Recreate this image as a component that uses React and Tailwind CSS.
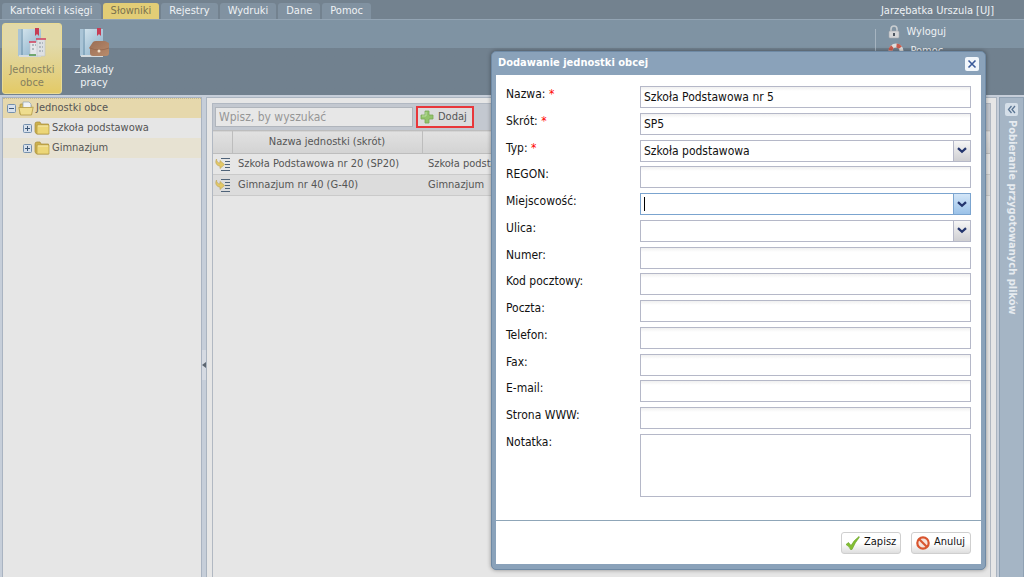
import React, { useState } from "react";

const tabs = ["Kartoteki i księgi", "Słowniki", "Rejestry", "Wydruki", "Dane", "Pomoc"];

const rows = [
  { name: "Szkoła Podstawowa nr 20 (SP20)", type: "Szkoła podstawowa" },
  { name: "Gimnazjum nr 40 (G-40)", type: "Gimnazjum" },
];

const fields = [
  { id: "nazwa", label: "Nazwa:", required: true, value: "Szkoła Podstawowa nr 5" },
  { id: "skrot", label: "Skrót:", required: true, value: "SP5" },
  { id: "typ", label: "Typ:", required: true, kind: "select", value: "Szkoła podstawowa" },
  { id: "regon", label: "REGON:" },
  { id: "miejscowosc", label: "Miejscowość:", kind: "select", active: true },
  { id: "ulica", label: "Ulica:", kind: "select" },
  { id: "numer", label: "Numer:" },
  { id: "kod", label: "Kod pocztowy:" },
  { id: "poczta", label: "Poczta:" },
  { id: "telefon", label: "Telefon:" },
  { id: "fax", label: "Fax:" },
  { id: "email", label: "E-mail:" },
  { id: "www", label: "Strona WWW:" },
  { id: "notatka", label: "Notatka:", kind: "textarea" },
];

/* Icons */

const BookIcon = ({ variant }) => (
  <svg width="32" height="32" viewBox="0 0 32 32" aria-hidden="true">
    <defs>
      <linearGradient id="cover" x1="0" y1="0" x2="1" y2="1">
        <stop offset="0" stopColor="#d9e8f0" />
        <stop offset="1" stopColor="#86adc7" />
      </linearGradient>
      <linearGradient id="leather" x1="0" y1="0" x2="1" y2="1">
        <stop offset="0" stopColor="#9a6d55" />
        <stop offset="1" stopColor="#b98c6c" />
      </linearGradient>
    </defs>
    <path d="M2 2h23v27H2z" fill="url(#cover)" />
    <path d="M2 2h3v27H2z" fill="#a9c4d6" />
    <path d="M6 2v27" stroke="#5f87a3" />
    <path d="M3 29h22" stroke="#d5dce0" strokeWidth="2" />
    <path d="M19 1h4v8l-2-2-2 2z" fill="#c63d55" />
    {variant === "units" ? (
      <g>
        <path d="M14 15h8v14h-8z" fill="#e4e7ea" stroke="#bcc4ca" strokeWidth=".6" />
        <path d="M21 12h8v17h-8z" fill="#dde0e3" stroke="#bcc4ca" strokeWidth=".6" />
        <path d="M20 12h10M13 15h7" stroke="#d4405c" strokeWidth="1.4" />
        <path d="M16 18h2M19 18h1M16 22h2M23 16h2M26 16h1M23 20h2M26 20h1M23 24h2M26 24h1" stroke="#b1b9c0" strokeWidth="2" />
        <path d="M13 28h7" stroke="#71a76e" strokeWidth="2" />
      </g>
    ) : (
      <g>
        <path d="M15 15q1-1 3-1h8q2 0 3 1l2 1v10q0 3-3 3H15q-3 0-3-3v-4l-1-1z" fill="url(#leather)" />
        <path d="M12 21q9 4 19 0" fill="none" stroke="#94684f" strokeWidth=".8" />
        <circle cx="21" cy="24" r="1.5" fill="#f0dfca" />
      </g>
    )}
  </svg>
);

const FolderIcon = ({ open }) => (
  <svg width="16" height="16" viewBox="0 0 16 16" aria-hidden="true">
    {open ? (
      <g>
        <path d="M2 13V4q0-1 1-1h3l1 1h6v9z" fill="#d8bb59" stroke="#ad9443" strokeWidth=".8" />
        <path d="M5 1h6l2 2v7H5z" fill="#f1f3f5" stroke="#8ea3b5" strokeWidth=".7" />
        <path d="M.8 6.5h12.5L15.2 6l-1.7 8H2.5z" fill="#efdd8e" stroke="#b49b47" strokeWidth=".8" />
      </g>
    ) : (
      <g>
        <path d="M1 4q0-2 2-2h3l1 2h7.5v10H2.5L1 12z" fill="#ccb14f" stroke="#a98e38" strokeWidth=".7" />
        <path d="M3 5h12v9H3z" fill="#ecd677" stroke="#b59c42" strokeWidth=".7" />
        <path d="M4 6h10" stroke="#f7eab0" />
      </g>
    )}
  </svg>
);

const ToggleIcon = ({ open }) => (
  <svg width="9" height="9" viewBox="0 0 9 9" aria-hidden="true">
    <rect x=".5" y=".5" width="8" height="8" rx="1" fill="#d7e0eb" stroke="#7590ae" />
    <path d={open ? "M2 4.5h5" : "M2 4.5h5M4.5 2v5"} stroke="#3d5878" />
  </svg>
);

const RowIcon = () => (
  <svg width="16" height="16" viewBox="0 0 16 16" aria-hidden="true">
    <path d="M6 2.5h9M10 5.5h5M10 8.5h5M10 11.5h5M6 14.5h9" stroke="#4f6379" />
    <path d="M1.5 3C-.5 7 2 10 5 10v2.500l4.500-4L5 4.500V7C3 7 1.500 5.500 1.500 3z" fill="#e2c868" stroke="#bda356" strokeWidth=".6" />
  </svg>
);

const PlusIcon = () => (
  <svg width="14" height="14" viewBox="0 0 14 14" aria-hidden="true">
    <path d="M5 1h4v4h4v4H9v4H5V9H1V5h4z" fill="#93c46c" stroke="#78a857" strokeWidth=".8" />
    <path d="M6 2v4H2" fill="none" stroke="#bbdda0" />
  </svg>
);

const LockIcon = () => (
  <svg width="12" height="14" viewBox="0 0 12 14" aria-hidden="true">
    <path d="M3 7V4a3 3 0 0 1 6 0v3" fill="none" stroke="#c9cdd0" strokeWidth="1.6" />
    <rect x="1" y="6" width="10" height="7" rx="1" fill="#d5d6d7" stroke="#a4aaaf" strokeWidth=".6" />
    <path d="M6 8v3" stroke="#4d5560" strokeWidth="2" />
  </svg>
);

const HelpIcon = () => (
  <svg width="16" height="16" viewBox="0 0 16 16" aria-hidden="true">
    <circle cx="8" cy="8" r="5.5" fill="none" stroke="#dfdddc" strokeWidth="4" />
    <circle cx="8" cy="8" r="5.5" fill="none" stroke="#c75b4e" strokeWidth="4" strokeDasharray="4.3 4.3" />
  </svg>
);

const Chevron = () => (
  <svg width="10" height="7" viewBox="0 0 10 7" aria-hidden="true">
    <path d="M1 1.200l4 3.600 4-3.600" fill="none" stroke="#24366e" strokeWidth="2.300" />
  </svg>
);

const CheckIcon = () => (
  <svg width="16" height="16" viewBox="0 0 16 16" aria-hidden="true">
    <path d="M1 9.5L3.5 7.500 6 10.500Q9 5 14 1.500L14.500 2Q10 7.500 7 14.500H5.500Q4 11 1 9.500z" fill="#83bf32" stroke="#65a022" strokeWidth=".6" />
  </svg>
);

const CancelIcon = () => (
  <svg width="16" height="16" viewBox="0 0 16 16" aria-hidden="true">
    <circle cx="8" cy="8" r="5.7" fill="#f5e3dc" stroke="#d9552f" strokeWidth="2.2" />
    <path d="M4 4l8 8" stroke="#d9552f" strokeWidth="2.2" />
  </svg>
);

/* Ribbon */

const Ribbon = () => (
  <header className="shrink-0 text-[#eef1f4]">
    <div className="flex h-[19px] items-end justify-between bg-[#73828f] pr-[30px]">
      <nav className="flex gap-[2px] pl-[2px]">
        {tabs.map((tab) => (
          <button
            key={tab}
            className={
              tab === "Słowniki"
                ? "h-4 rounded-t-[3px] bg-[#e2cd76] px-2 leading-4 text-[#7b734f]"
                : "h-4 rounded-t-[3px] bg-[#8192a1] px-2 leading-4"
            }
          >
            {tab}
          </button>
        ))}
      </nav>
      <span className="leading-4">Jarzębatka Urszula [UJ]</span>
    </div>
    <div className="flex h-[76px] justify-between border-t border-[#93a4b3] bg-linear-to-b from-[#7f93a3] from-37% to-[#71818f] to-38% pt-[3px] pr-[78px] pl-[2px]">
      <div className="flex gap-[2px]">
        <button className="flex h-[71px] w-[60px] flex-col items-center rounded-[3px] border border-[#eadb93] bg-linear-to-b from-[#e2d9a8] from-30% to-[#e3ca66] pt-[3px] leading-[13px] text-[#857f60]">
          <BookIcon variant="units" />
          <span className="pt-1">Jednostki<br />obce</span>
        </button>
        <button className="flex h-[71px] w-[60px] flex-col items-center pt-[4px] leading-[13px]">
          <BookIcon variant="works" />
          <span className="pt-1">Zakłady<br />pracy</span>
        </button>
      </div>
      <div className="flex gap-3">
        <div className="my-[6px] w-px bg-[#a6b4c0]" />
        <div className="flex flex-col gap-[3px] pt-px">
          <a href="#wyloguj" className="flex h-4 items-center gap-[6px]">
            <LockIcon />
            Wyloguj
          </a>
          <a href="#pomoc" className="flex h-4 items-center gap-[6px]">
            <HelpIcon />
            Pomoc
          </a>
        </div>
      </div>
    </div>
  </header>
);

/* Tree on the left */

const Tree = () => (
  <aside className="w-[200px] shrink-0 border border-b-0 border-[#a9b3c1] bg-[#e6e6e6] text-[#555]">
    <ul>
      <li>
        <button className="flex h-5 w-full items-center gap-[2px] border-t border-dotted border-[#c5b88d] bg-[#e6d8ac] pl-1">
          <ToggleIcon open />
          <FolderIcon open />
          Jednostki obce
        </button>
        <ul>
          <li>
            <button className="flex h-5 w-full items-center gap-[2px] pl-5">
              <ToggleIcon />
              <FolderIcon />
              Szkoła podstawowa
            </button>
          </li>
          <li>
            <button className="flex h-5 w-full items-center gap-[2px] bg-[#e7e2d2] pl-5">
              <ToggleIcon />
              <FolderIcon />
              Gimnazjum
            </button>
          </li>
        </ul>
      </li>
    </ul>
  </aside>
);

/* Grid with the list of units */

const UnitsPanel = () => (
  <main className="min-w-0 grow border border-b-0 border-[#aab4c0] bg-[#e6e6e6] px-[5px] pt-[5px] text-[#555]">
    <div className="h-full border border-b-0 border-[#b1b8c2]">
      <div className="flex h-[26px] items-center gap-[3px] bg-[#c3c8d0] pl-[2px]">
        <input
          aria-label="Wyszukaj"
          placeholder="Wpisz, by wyszukać"
          className="h-5 w-[198px] border border-[#b0b5bc] bg-[#e7e7e7] px-[3px] text-[12px] placeholder:text-[#969696]"
        />
        <button className="flex h-[22px] w-[58px] items-center gap-[4px] border-2 border-[#e8373b] bg-[#dcdcdd] pl-[2px]">
          <PlusIcon />
          Dodaj
        </button>
      </div>
      <table className="w-full table-fixed border-collapse">
        <thead>
          <tr className="h-[23px] border-y border-[#bdbdbd] bg-linear-to-b from-[#e1e1e1] to-[#d3d3d3]">
            <th className="w-[19px] border-r border-[#bdbdbd]" />
            <th className="w-[190px] border-r border-[#bdbdbd] font-normal">Nazwa jednostki (skrót)</th>
            <th className="font-normal">Typ</th>
          </tr>
        </thead>
        <tbody>
          {rows.map((row) => (
            <tr key={row.name} className="h-[21px] border-b border-[#cacaca] even:bg-[#dcdcdc]">
              <td className="pl-[2px]"><RowIcon /></td>
              <td className="pl-[6px] whitespace-nowrap">{row.name}</td>
              <td className="pl-[6px] whitespace-nowrap">{row.type}</td>
            </tr>
          ))}
        </tbody>
      </table>
    </div>
  </main>
);

/* Dialog */

const Control = ({ field }) => {
  const [value, setValue] = useState(field.value || "");
  const onChange = (e) => setValue(e.target.value);

  if (field.kind === "textarea") {
    return (
      <textarea
        id={field.id}
        value={value}
        onChange={onChange}
        className="h-[63px] w-full resize-none border border-[#b5b8c8] bg-white px-[3px] outline-none"
      />
    );
  }

  if (field.kind === "select") {
    return (
      <div className="relative w-full">
        <select
          id={field.id}
          value={value}
          onChange={onChange}
          className={
            field.active
              ? "block h-[22px] w-full appearance-none border border-[#7ba4cf] bg-white px-[3px] outline-none"
              : "block h-[22px] w-full appearance-none border border-[#b5b8c8] bg-white px-[3px] outline-none"
          }
        >
          <option value={value}>{value}</option>
        </select>
        {field.active && <span className="pointer-events-none absolute top-1 left-1 h-[14px] w-px bg-black" />}
        <span
          className={
            field.active
              ? "pointer-events-none absolute top-0 right-0 flex h-[22px] w-[18px] items-center justify-center border border-[#7ba4cf] bg-linear-to-b from-[#d3e6f8] to-[#9bc2e8]"
              : "pointer-events-none absolute top-0 right-0 flex h-[22px] w-[18px] items-center justify-center border border-[#b5b8c8] bg-linear-to-b from-[#f6f6f6] to-[#cfcfd2]"
          }
        >
          <Chevron />
        </span>
      </div>
    );
  }

  return (
    <input
      id={field.id}
      type="text"
      value={value}
      onChange={onChange}
      className="h-[22px] w-full border border-[#b5b8c8] bg-white bg-linear-to-b from-[#f0f0f0] to-white to-20% px-[3px] outline-none"
    />
  );
};

const UnitDialog = () => (
  <div
    role="dialog"
    aria-labelledby="dialog-title"
    className="absolute top-[51px] right-[38px] w-[495px] rounded-[5px] border border-[#6f8aa5] bg-[#8aa2ba] px-1 pb-[5px] text-[12px] text-[#111] shadow-[0_0_4px_#0006]"
  >
    <div className="flex h-[23px] items-center justify-between px-[2px]">
      <h2 id="dialog-title" className="text-[11px] font-bold text-white">Dodawanie jednostki obcej</h2>
      <button aria-label="Zamknij" className="flex size-[14px] items-center justify-center rounded-[2px] bg-[#f1f6fb]">
        <svg width="10" height="10" viewBox="0 0 10 10" aria-hidden="true">
          <path d="M1.5 1.5l7 7M8.5 1.5l-7 7" stroke="#3b5b9a" strokeWidth="1.600" />
        </svg>
      </button>
    </div>
    <form className="bg-white" onSubmit={(e) => e.preventDefault()}>
      <div className="flex h-[446px] flex-col justify-between border-b border-[#8fa6b8] px-[10px] pt-[11px] pb-[23px]">
        {fields.map((field) => (
          <div key={field.id} className="flex">
            <label htmlFor={field.id} className="w-[134px] shrink-0 leading-4">
              {field.label}
              {field.required && <span className="text-[#f00]"> *</span>}
            </label>
            <Control field={field} />
          </div>
        ))}
      </div>
      <div className="flex h-[43px] items-center justify-end gap-[10px] px-[10px] text-[11px]">
        <button type="submit" className="flex h-[22px] w-[60px] items-center gap-[3px] rounded-[3px] border border-[#cfcfcf] bg-linear-to-b from-white from-50% to-[#dedede] pl-[3px]">
          <CheckIcon />
          Zapisz
        </button>
        <button type="button" className="flex h-[22px] w-[60px] items-center gap-[3px] rounded-[3px] border border-[#cfcfcf] bg-linear-to-b from-white from-50% to-[#dedede] pl-[3px]">
          <CancelIcon />
          Anuluj
        </button>
      </div>
    </form>
  </div>
);

const App = () => {
  return (
    <div className="relative flex h-screen flex-col overflow-hidden bg-[#c6ced9] font-['DejaVu_Sans_Condensed','DejaVu_Sans',sans-serif] text-[11px]">
      <Ribbon />
      <div className="flex min-h-0 grow pt-[2px] pl-[2px]">
        <Tree />
        <div className="flex w-[4px] shrink-0 items-center">
          <button aria-label="Zwiń panel" className="mt-14 flex h-[30px] w-[4px] items-center bg-[#d5dae2]">
            <svg width="4" height="6" viewBox="0 0 4 6" aria-hidden="true">
              <path d="M4 0v6L0 3z" fill="#5c6570" />
            </svg>
          </button>
        </div>
        <UnitsPanel />
        <aside className="ml-[2px] flex w-[25px] shrink-0 flex-col items-center gap-1 border border-b-0 border-[#8fa1b3] bg-[#a5b5c5] pt-[5px]">
          <button aria-label="Rozwiń panel" className="flex size-[13px] items-center justify-center rounded-[2px] bg-[#d5dfe9]">
            <svg width="9" height="9" viewBox="0 0 9 9" aria-hidden="true">
              <path d="M4.5 1L1.5 4.500l3 3.500M8 1L5 4.500 8 8" fill="none" stroke="#5a7593" strokeWidth="1.300" />
            </svg>
          </button>
          <h2 className="font-bold whitespace-nowrap text-[#e6ebf0] [writing-mode:vertical-rl]">
            Pobieranie przygotowanych plików
          </h2>
        </aside>
      </div>
      <UnitDialog />
    </div>
  );
};

export default App;
